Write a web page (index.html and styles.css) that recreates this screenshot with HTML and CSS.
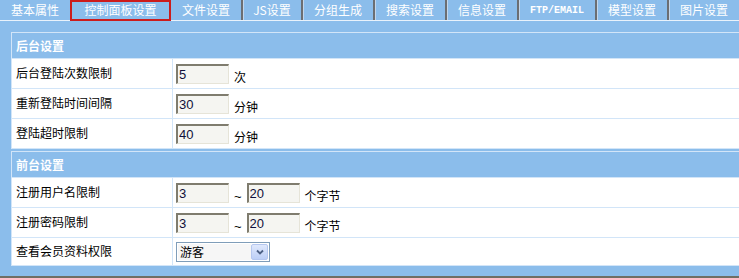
FILE: index.html
```html
<!DOCTYPE html>
<html lang="zh-CN">
<head>
<meta charset="utf-8">
<title>控制面板设置</title>
<link rel="stylesheet" href="styles.css">
</head>
<body>
<div class="tabs">
  <div class="tab w70">基本属性</div>
  <div class="tab active">控制面板设置</div>
  <div class="tab w70">文件设置</div>
  <div class="tab sep w60">JS设置</div>
  <div class="tab sep w72">分组生成</div>
  <div class="tab sep w72">搜索设置</div>
  <div class="tab sep w72">信息设置</div>
  <div class="tab sep w78 latin">FTP/EMAIL</div>
  <div class="tab sep w72">模型设置</div>
  <div class="tab sep w72">图片设置</div>
</div>
<div class="main">
  <div class="tbl">
    <div class="hdr">后台设置</div>
    <div class="row">
      <div class="lbl">后台登陆次数限制</div>
      <div class="val"><input class="inp" type="text" value="5"><span class="unit">次</span></div>
    </div>
    <div class="row">
      <div class="lbl">重新登陆时间间隔</div>
      <div class="val"><input class="inp" type="text" value="30"><span class="unit">分钟</span></div>
    </div>
    <div class="row">
      <div class="lbl">登陆超时限制</div>
      <div class="val"><input class="inp" type="text" value="40"><span class="unit">分钟</span></div>
    </div>
  </div>
  <div class="tbl second">
    <div class="hdr">前台设置</div>
    <div class="row">
      <div class="lbl">注册用户名限制</div>
      <div class="val"><input class="inp" type="text" value="3"><span class="unit tilde">~</span><input class="inp" type="text" value="20"><span class="unit">个字节</span></div>
    </div>
    <div class="row">
      <div class="lbl">注册密码限制</div>
      <div class="val"><input class="inp" type="text" value="3"><span class="unit tilde">~</span><input class="inp" type="text" value="20"><span class="unit">个字节</span></div>
    </div>
    <div class="row last">
      <div class="lbl">查看会员资料权限</div>
      <div class="val">
        <div class="sel"><span class="sel-text">游客</span><span class="sel-btn"><svg width="8" height="6" viewBox="0 0 8 6"><path d="M1 1.5 L4 4.5 L7 1.5" fill="none" stroke="#4d6185" stroke-width="1.8"/></svg></span></div>
      </div>
    </div>
  </div>
</div>
</body>
</html>
```
FILE: styles.css
```css
html, body {
  margin: 0;
  padding: 0;
}
body {
  width: 739px;
  height: 278px;
  overflow: hidden;
  background: #8bbdeb;
  font-family: "Noto Sans CJK SC", "Liberation Sans", sans-serif;
  font-size: 12px;
  color: #000;
}
.tabs {
  display: flex;
  height: 20px;
  border-bottom: 1px solid #e9f2fb;
}
.tab {
  box-sizing: border-box;
  height: 20px;
  display: flex;
  align-items: center;
  justify-content: center;
  color: #fff;
  line-height: 1;
  flex: none;
}
.w60 { width: 60px; }
.w70 { width: 70px; }
.w72 { width: 72px; }
.w78 { width: 78px; }
.sep {
  border-left: 2px solid #6b6e72;
  box-shadow: inset 1px 0 0 #c3d6ea;
}
.active {
  width: 101px;
  height: 21px;
  border: 2px solid #cc1c1c;
  position: relative;
  z-index: 1;
  padding-bottom: 1px;
}
.latin {
  font-family: "Liberation Mono", monospace;
  font-size: 10px;
  font-weight: bold;
  padding-top: 1px;
}
.main {
  padding: 11px 0 10px 11px;
  border-bottom: 2px solid #6f6e64;
}
.tbl {
  border: 1px solid #d2e5f8;
  border-right: none;
}
.tbl.second {
  margin-top: 2px;
}
.hdr {
  height: 25px;
  display: flex;
  align-items: center;
  padding-left: 4px;
  color: #fff;
  font-weight: bold;
}
.row {
  display: flex;
  height: 29px;
  border-top: 1px solid #d2e5f8;
  background: #fff;
}
.row.last {
  height: 27px;
}
.lbl {
  box-sizing: border-box;
  width: 161px;
  border-right: 1px solid #d2e5f8;
  padding: 0 0 2px 4px;
  display: flex;
  align-items: center;
}
.val {
  display: flex;
  align-items: center;
  gap: 5px;
  padding-left: 3px;
}
.inp {
  box-sizing: border-box;
  width: 53px;
  height: 20px;
  margin: 0;
  padding: 0 0 0 1px;
  border-style: solid;
  border-width: 2px 1px 1px 2px;
  border-color: #7f7c6e #e6e4d8 #e6e4d8 #7f7c6e;
  background: #f5f5f1;
  font-family: "Liberation Sans", Arial, sans-serif;
  font-size: 13px;
  color: #10103a;
  outline: none;
}
.unit {
  margin-top: 6px;
  line-height: 1;
}
.tilde {
  font-family: "Liberation Sans", Arial, sans-serif;
  font-size: 13px;
  margin-top: 8px;
}
.sel {
  box-sizing: border-box;
  width: 94px;
  height: 20px;
  margin-top: 1px;
  border: 1px solid #7f9db9;
  background: #fff;
  display: flex;
  align-items: stretch;
  padding: 1px;
}
.sel-text {
  flex: 1;
  background: #f6f6f6;
  padding-left: 2px;
  display: flex;
  align-items: center;
  line-height: 1;
}
.sel-btn {
  box-sizing: border-box;
  width: 17px;
  border: 1px solid #b5c7ef;
  border-radius: 2px;
  background: linear-gradient(#dfe8fc, #bccff6);
  display: flex;
  align-items: center;
  justify-content: center;
}
```
